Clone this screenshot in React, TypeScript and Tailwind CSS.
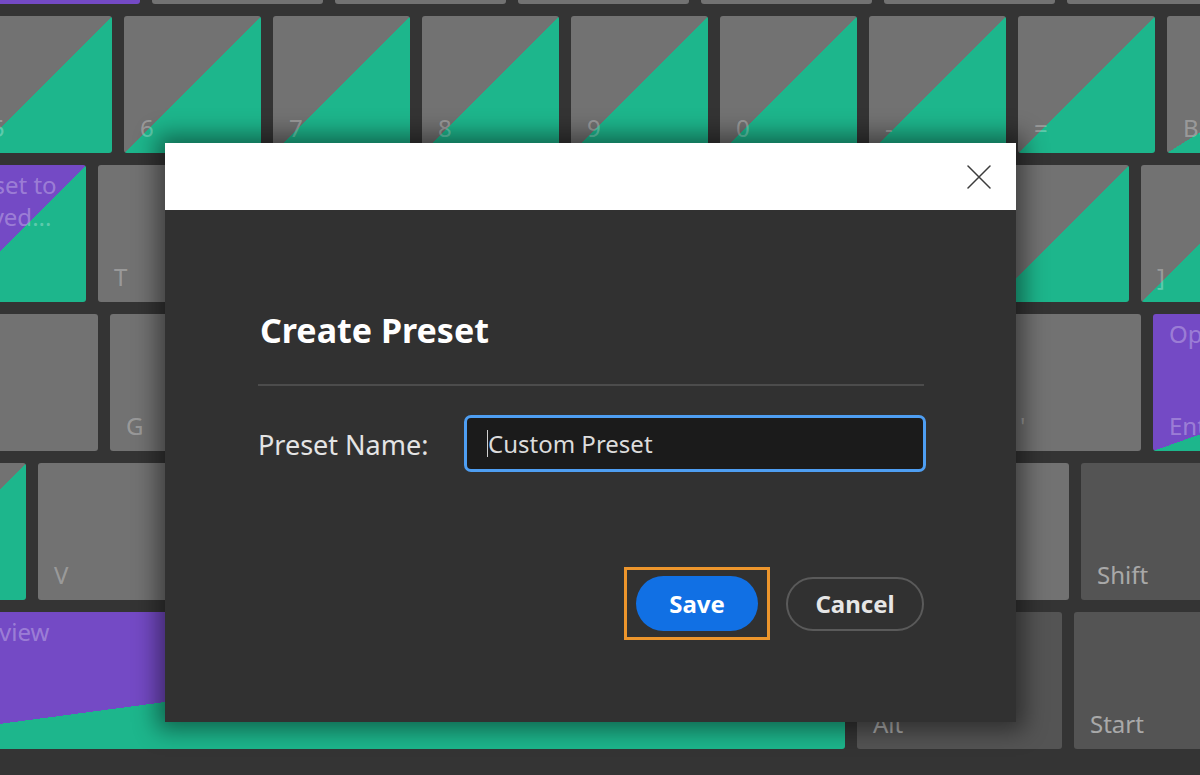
import React from "react";

type Key = { w: string; c: string; top?: string; bottom?: string; topPad?: string };

const GRAY = "bg-[#727272] text-white/30";
const DIAG = "bg-[linear-gradient(to_top_left,#1db68c_50%,#727272_50%)] text-white/30";
const PDIAG = "bg-[linear-gradient(to_top_left,#1db68c_50%,#744ac5_50%)] text-white/30";
const PURPLE = "bg-[#744ac5] text-white/30";
const DARK = "bg-[#545454] text-white/50";

const rows: { ml: string; keys: Key[] }[] = [
  {
    ml: "ml-[-31px]",
    keys: [
      { w: "w-[171px]", c: PURPLE },
      { w: "w-[171px]", c: GRAY },
      { w: "w-[171px]", c: GRAY },
      { w: "w-[171px]", c: GRAY },
      { w: "w-[171px]", c: GRAY },
      { w: "w-[171px]", c: GRAY },
      { w: "w-[171px]", c: GRAY },
    ],
  },
  {
    ml: "ml-[-25px]",
    keys: [
      { w: "w-[137px]", c: DIAG, bottom: "5" },
      { w: "w-[137px]", c: DIAG, bottom: "6" },
      { w: "w-[137px]", c: DIAG, bottom: "7" },
      { w: "w-[137px]", c: DIAG, bottom: "8" },
      { w: "w-[137px]", c: DIAG, bottom: "9" },
      { w: "w-[137px]", c: DIAG, bottom: "0" },
      { w: "w-[137px]", c: DIAG, bottom: "-" },
      { w: "w-[137px]", c: DIAG, bottom: "=" },
      { w: "w-[220px]", c: DIAG, bottom: "Backspace" },
    ],
  },
  {
    ml: "ml-[-51px]",
    keys: [
      { w: "w-[137px]", c: PDIAG, top: "Reset to Saved...", bottom: "R" },
      { w: "w-[137px]", c: GRAY, bottom: "T" },
      { w: "w-[137px]", c: GRAY, bottom: "Y" },
      { w: "w-[137px]", c: GRAY, bottom: "U" },
      { w: "w-[137px]", c: GRAY, bottom: "I" },
      { w: "w-[137px]", c: GRAY, bottom: "O" },
      { w: "w-[137px]", c: GRAY, bottom: "P" },
      { w: "w-[137px]", c: DIAG, bottom: "[" },
      { w: "w-[137px]", c: DIAG, bottom: "]" },
    ],
  },
  {
    ml: "ml-[-39px]",
    keys: [
      { w: "w-[137px]", c: GRAY, bottom: "F" },
      { w: "w-[137px]", c: GRAY, bottom: "G" },
      { w: "w-[137px]", c: GRAY, bottom: "H" },
      { w: "w-[137px]", c: GRAY, bottom: "J" },
      { w: "w-[137px]", c: GRAY, bottom: "K" },
      { w: "w-[137px]", c: GRAY, bottom: "L" },
      { w: "w-[137px]", c: GRAY, bottom: ";" },
      { w: "w-[137px]", c: GRAY, bottom: "'" },
      { w: "w-[387px]", c: PDIAG, top: "Open", bottom: "Enter" },
    ],
  },
  {
    ml: "ml-[-111px]",
    keys: [
      { w: "w-[137px]", c: DIAG, bottom: "C" },
      { w: "w-[137px]", c: GRAY, bottom: "V" },
      { w: "w-[137px]", c: GRAY, bottom: "B" },
      { w: "w-[137px]", c: GRAY, bottom: "N" },
      { w: "w-[137px]", c: GRAY, bottom: "M" },
      { w: "w-[137px]", c: GRAY, bottom: "," },
      { w: "w-[137px]", c: GRAY, bottom: "." },
      { w: "w-[137px]", c: GRAY, bottom: "/" },
      { w: "w-[260px]", c: DARK, bottom: "Shift" },
    ],
  },
  {
    ml: "ml-[-190px]",
    keys: [
      { w: "w-[1035px]", c: PDIAG, top: "Preview", bottom: "Space", topPad: "pl-[136px]" },
      { w: "w-[205px]", c: DARK, bottom: "Alt" },
      { w: "w-[220px]", c: DARK, bottom: "Start" },
    ],
  },
];

function KeyCap({ k }: { k: Key }) {
  return (
    <div
      className={`${k.w} ${k.c} h-[137px] shrink-0 rounded-[3px] flex flex-col justify-between px-[16px] pt-[4px] pb-[9px] text-[24px] leading-[32px] overflow-hidden`}
    >
      <div className={`${k.topPad ?? ""} whitespace-pre-wrap`}>{k.top ?? ""}</div>
      <div>{k.bottom ?? ""}</div>
    </div>
  );
}

function CloseIcon() {
  return (
    <svg width="24" height="24" viewBox="0 0 24 24" fill="none">
      <path d="M1 1 L23 23 M23 1 L1 23" stroke="#3c3c3c" strokeWidth="1.5" strokeLinecap="round" />
    </svg>
  );
}

export default function App() {
  return (
    <div className="relative h-[775px] w-[1200px] overflow-hidden bg-[#343434] font-['Noto_Sans',sans-serif]">
      <div className="mt-[-133px] flex flex-col gap-[12px]">
        {rows.map((r, i) => (
          <div key={i} className={`${r.ml} flex gap-[12px] h-[137px]`}>
            {r.keys.map((k, j) => (
              <KeyCap key={j} k={k} />
            ))}
          </div>
        ))}
      </div>

      <div className="absolute left-[165px] top-[143px] w-[851px] h-[579px] flex flex-col shadow-[0_0_22px_8px_rgba(0,0,0,0.45)]">
        <div className="h-[67px] bg-white flex items-center justify-end pr-[25px]">
          <CloseIcon />
        </div>
        <div className="flex-1 bg-[#313131] pl-[93px] pr-[92px] flex flex-col">
          <h1 className="mt-[100px] pl-[2px] text-[34px] leading-[41px] font-bold text-white">Create Preset</h1>
          <div className="mt-[33px] h-[2px] bg-[#4c4c4c]" />
          <div className="mt-[29px] flex items-center mr-[-3px]">
            <div className="w-[206px] text-[27px] text-[#e4e4e4] leading-none pt-[2px]">Preset Name:</div>
            <div className="w-[462px] h-[57px] rounded-[7px] border-[3px] border-[#4e9ef2] bg-[#1b1b1b] flex items-center pl-[20px]">
              <span className="w-px h-[27px] bg-[#d0d0d0]" />
              <span className="text-[24px] text-[#dcdcdc] leading-none">Custom Preset</span>
            </div>
          </div>
          <div className="mt-[95px] flex justify-end items-center gap-[16px]">
            <div className="border-[3px] border-[#ec952c] px-[9px] py-[6px]">
              <button className="w-[122px] h-[55px] rounded-full bg-[#1170e4] text-white text-[24px] font-bold leading-none">
                Save
              </button>
            </div>
            <button className="w-[138px] h-[54px] rounded-full border-2 border-[#5a5a5a] text-[#e6e6e6] text-[24px] font-bold leading-none">
              Cancel
            </button>
          </div>
        </div>
      </div>
    </div>
  );
}
